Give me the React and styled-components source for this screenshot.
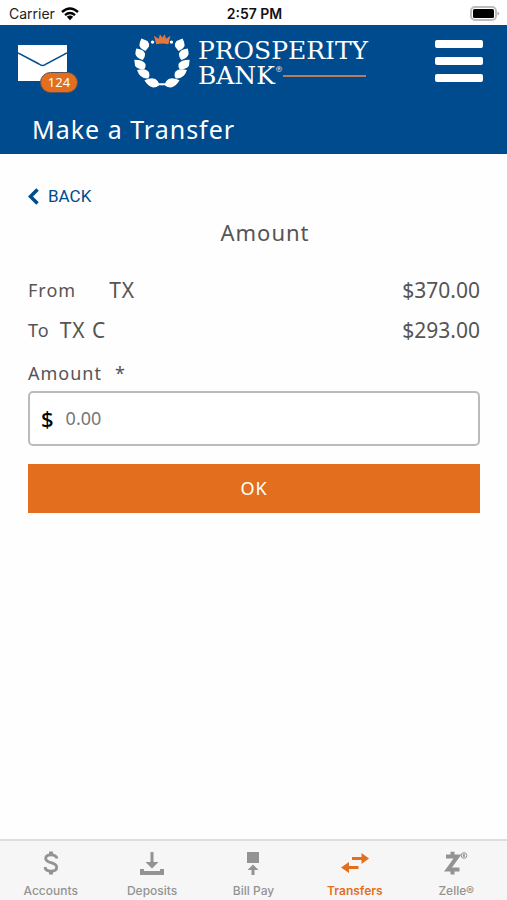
import React from "react";
import styled, { createGlobalStyle } from "styled-components";

const blue = "#004b8d";
const orange = "#e36f1e";
const gray = "#939393";

const GlobalStyle = createGlobalStyle`
  * { box-sizing: border-box; }
  body { margin: 0; background: #fefefe; font-family: "Noto Sans", "Open Sans", sans-serif; color: #555; }
  button, input { font: inherit; }
  svg { display: block; flex: none; }
`;

const Screen = styled.div`
  display: flex;
  flex-direction: column;
  min-height: 100vh;
`;

const StatusBar = styled.div`
  display: grid;
  grid-template-columns: 1fr auto 1fr;
  align-items: center;
  height: 25px;
  padding: 2px 7px 0 9px;
  background: #fff;
  color: #222;
  font: 400 14px/20px Inter, sans-serif;
`;

const Carrier = styled.div`
  display: flex;
  align-items: center;
  gap: 6px;
`;

const Clock = styled.time`
  font-weight: 600;
  color: #111;
`;

const BatterySlot = styled.div`
  justify-self: end;
`;

const Header = styled.header`
  background: ${blue};
  color: #fff;
  height: 129px;
`;

const HeaderRow = styled.div`
  display: flex;
  align-items: flex-start;
  justify-content: space-between;
  height: 86px;
  padding: 8px 24px 0 18px;
`;

const MailButton = styled.button`
  position: relative;
  margin: 12px 0 0;
  padding: 0;
  border: 0;
  background: none;
`;

const Badge = styled.span`
  position: absolute;
  left: 22px;
  top: 27px;
  width: 38px;
  height: 21px;
  border: 1px solid #5b5357;
  border-radius: 11px;
  background: ${orange};
  color: #fff;
  font-size: 13px;
  line-height: 19px;
  text-align: center;
`;

const Brand = styled.div`
  display: flex;
  gap: 8px;
`;

const BrandName = styled.div`
  padding-top: 5px;
  font: 400 25px/25px "DejaVu Serif", serif;
`;

const BrandSecond = styled.div`
  display: flex;
  align-items: center;
`;

const Registered = styled.sup`
  align-self: flex-start;
  font-size: 8px;
  line-height: 14px;
`;

const BrandRule = styled.span`
  flex: 1;
  height: 2px;
  margin-right: 2px;
  background: #b97b5c;
`;

const MenuButton = styled.button`
  display: flex;
  flex-direction: column;
  gap: 9px;
  width: 48px;
  margin: 7px 0 0;
  padding: 0;
  border: 0;
  background: none;
`;

const MenuLine = styled.span`
  height: 8px;
  border-radius: 2px;
  background: #fff;
`;

const PageTitle = styled.h1`
  margin: 0;
  padding-left: 32px;
  font-size: 25px;
  font-weight: 400;
  line-height: 36px;
  letter-spacing: 1px;
`;

const Main = styled.main`
  flex: 1;
  padding: 30px 27px 0 28px;
`;

const BackLink = styled.a`
  display: inline-flex;
  align-items: center;
  gap: 9px;
  color: ${blue};
  font: 400 17px/24px Roboto, sans-serif;
  text-decoration: none;
`;

const StepTitle = styled.h2`
  margin: 6px 0 0;
  padding-left: 22px;
  font-size: 22px;
  font-weight: 400;
  line-height: 32px;
  letter-spacing: 1px;
  text-align: center;
`;

const Accounts = styled.dl`
  margin: 22px 0 0;
`;

const AccountRow = styled.div`
  display: flex;
  align-items: center;
  height: 40px;
  font-size: 21px;
`;

const Role = styled.dt`
  margin-right: ${(p) => (p.$wide ? 33 : 10)}px;
  font-size: 18px;
  letter-spacing: 1px;
`;

const AccountName = styled.dd`
  margin: 0;
  letter-spacing: 1px;
`;

const Balance = styled.dd`
  margin: 0 0 0 auto;
`;

const FieldLabel = styled.label`
  display: block;
  margin-top: 9px;
  font-size: 18px;
  line-height: 28px;
  letter-spacing: 1px;
`;

const Required = styled.span`
  margin-left: 13px;
`;

const Field = styled.div`
  display: flex;
  align-items: center;
  gap: 12px;
  height: 55px;
  margin-top: 4px;
  padding: 0 11px;
  border: 2px solid #bbb;
  border-radius: 5px;
  background: #fff;
`;

const Currency = styled.span`
  color: #000;
  font-size: 22px;
  font-weight: 500;
`;

const AmountInput = styled.input`
  flex: 1;
  min-width: 0;
  padding: 0;
  border: 0;
  outline: 0;
  background: none;
  color: #333;
  font-size: 18px;

  &::placeholder { color: #777; opacity: 1; }
`;

const Submit = styled.button`
  display: block;
  width: 100%;
  height: 49px;
  margin-top: 18px;
  padding: 0;
  border: 0;
  background: ${orange};
  color: #fff;
  font-size: 18px;
  letter-spacing: 1px;
`;

const TabBar = styled.nav`
  display: grid;
  grid-template-columns: repeat(5, 1fr);
  height: 61px;
  border-top: 2px solid #dedede;
  background: #f6f6f6;
`;

const Tab = styled.a`
  display: flex;
  flex-direction: column;
  align-items: center;
  gap: 5px;
  padding-top: 8px;
  color: ${(p) => (p.$active ? orange : gray)};
  font-family: Inter, sans-serif;
  font-size: 12px;
  font-weight: ${(p) => (p.$active ? 600 : 500)};
  line-height: 18px;
  text-decoration: none;
`;

const leaves = [
  "M22 16L40 24Q47 32 44 41L34 53Q18 47 16 37Q16 27 22 16Z",
  "M7 46Q30 49 33 62Q33 72 26 80Q8 75 4 62Q4 54 7 46Z",
  "M1 79Q28 79 34 92Q36 102 30 108Q8 107 3 96Z",
  "M9 110Q36 103 45 118Q48 128 42 135Q18 137 9 110Z",
  "M31 140Q60 127 70 142Q72 150 80 152Q66 163 54 161Q40 156 31 140Z",
];

function LeafSide() {
  return (
    <>
      {leaves.map((d) => <path key={d} d={d} />)}
      <circle cx="55" cy="27" r="5" />
    </>
  );
}

function Wreath() {
  return (
    <svg width="56" height="56" viewBox="0 0 166 166" fill="#fff" aria-hidden="true">
      <g><LeafSide /></g>
      <g transform="translate(166 0) scale(-1 1)"><LeafSide /></g>
      <path d="M76 149H90V155H76Z" />
      <path fill="#e5773c" d="M66 33L59 8L73 17L77 4L84 13L91 4L95 17L108 8L102 33Q84 29 66 33Z" />
    </svg>
  );
}

function WifiIcon() {
  return (
    <svg width="18" height="14" viewBox="0 0 18 14" fill="none" stroke="#000" strokeWidth="2.4">
      <path d="M1 5Q9-2 17 5M4 8.200Q9 4 14 8.200" />
      <path d="M5.800 9.800Q9 7.200 12.200 9.800L9 13.200Z" fill="#000" stroke="none" />
    </svg>
  );
}

function BatteryIcon() {
  return (
    <svg width="30" height="15" viewBox="0 0 30 15">
      <rect x="1" y="1" width="25" height="13" rx="4" fill="#fff" stroke="#bdbdbd" strokeWidth="2" />
      <rect x="3" y="3" width="21" height="9" rx="1.500" fill="#000" />
      <path d="M27.500 5.500Q31 7.500 27.500 9.500Z" fill="#aaa" />
    </svg>
  );
}

function MailIcon() {
  return (
    <svg width="49" height="36" viewBox="0 0 49 36">
      <path fill="#fff" d="M0 0H49V36H0Z" />
      <path fill="none" stroke={blue} strokeWidth="1.500" d="M0 8L21 19Q25 22 28 19L49 8" />
    </svg>
  );
}

function ChevronIcon() {
  return (
    <svg width="11" height="17" viewBox="0 0 11 17" fill="none" stroke={blue} strokeWidth="3.500">
      <path d="M9.500 1.500L2.500 8.500L9.500 15.500" />
    </svg>
  );
}

function DollarIcon() {
  return (
    <svg width="28" height="28" viewBox="0 0 28 28" fill="none" stroke="currentColor" strokeWidth="2.800">
      <path d="M20 9.500C19.500 6.800 17.500 5.800 14 5.800C10.500 5.800 8.700 7.200 8.700 9.500C8.700 12 11 12.800 14 13.600C17.500 14.500 19.700 15.500 19.700 18.300C19.700 20.800 17.500 22.200 14 22.200C10.500 22.200 8.300 20.800 8 18" />
      <path strokeWidth="4" d="M14 2.500V6M14 22V25.500" />
    </svg>
  );
}

function DepositIcon() {
  return (
    <svg width="28" height="28" viewBox="0 0 28 28" fill="currentColor">
      <path d="M12.500 3H15.500V13H20.500L14 19.500L7.500 13H12.500Z" />
      <path d="M2 20H6V22H22V20H26V26H2Z" />
    </svg>
  );
}

function BillPayIcon() {
  return (
    <svg width="28" height="28" viewBox="0 0 28 28" fill="currentColor">
      <path d="M8 3H20V14H8Z" />
      <path d="M14 15.500L19.500 21H15.500V26H12.500V21H8.500Z" />
    </svg>
  );
}

function TransferIcon() {
  return (
    <svg width="28" height="28" viewBox="0 0 28 28" fill="currentColor">
      <path d="M11 8H20.500V4L28 9.500L20.500 15V11H11Z" />
      <path d="M17.500 17H8V13L0 18.500L8 24V20H17.500Z" />
    </svg>
  );
}

function ZelleIcon() {
  return (
    <svg width="34" height="28" viewBox="0 0 34 28" fill="none" stroke="currentColor">
      <path strokeWidth="4" d="M7 7.500H18.500L9 20.500H20.500" />
      <path strokeWidth="4" d="M13.500 2.800V7M13.500 21V25.500" />
      <circle cx="25" cy="6.500" r="2.800" strokeWidth="1" />
      <path strokeWidth="1" d="M24.300 8V5.300H25.500V6.500H24.500L25.800 8" />
    </svg>
  );
}

const tabs = [
  ["Accounts", DollarIcon],
  ["Deposits", DepositIcon],
  ["Bill Pay", BillPayIcon],
  ["Transfers", TransferIcon],
  ["Zelle®", ZelleIcon],
];

export default function App() {
  return (
    <Screen>
      <GlobalStyle />
      <StatusBar>
        <Carrier>Carrier <WifiIcon /></Carrier>
        <Clock>2:57 PM</Clock>
        <BatterySlot><BatteryIcon /></BatterySlot>
      </StatusBar>
      <Header>
        <HeaderRow>
          <MailButton type="button" aria-label="Messages, 124 unread">
            <MailIcon />
            <Badge>124</Badge>
          </MailButton>
          <Brand>
            <Wreath />
            <BrandName>
              <div>PROSPERITY</div>
              <BrandSecond>BANK<Registered>®</Registered><BrandRule /></BrandSecond>
            </BrandName>
          </Brand>
          <MenuButton type="button" aria-label="Menu">
            <MenuLine /><MenuLine /><MenuLine />
          </MenuButton>
        </HeaderRow>
        <PageTitle>Make a Transfer</PageTitle>
      </Header>
      <Main>
        <BackLink href="#back"><ChevronIcon />BACK</BackLink>
        <StepTitle>Amount</StepTitle>
        <Accounts>
          <AccountRow>
            <Role $wide>From</Role><AccountName>TX</AccountName><Balance>$370.00</Balance>
          </AccountRow>
          <AccountRow>
            <Role>To</Role><AccountName>TX C</AccountName><Balance>$293.00</Balance>
          </AccountRow>
        </Accounts>
        <FieldLabel htmlFor="amount">Amount<Required>*</Required></FieldLabel>
        <Field>
          <Currency>$</Currency>
          <AmountInput id="amount" inputMode="decimal" placeholder="0.00" required />
        </Field>
        <Submit type="button">OK</Submit>
      </Main>
      <TabBar aria-label="Main">
        {tabs.map(([label, Icon]) => (
          <Tab
            key={label}
            href={`#${label}`}
            $active={label === "Transfers"}
            aria-current={label === "Transfers" ? "page" : undefined}
          >
            <Icon />
            {label}
          </Tab>
        ))}
      </TabBar>
    </Screen>
  );
}
